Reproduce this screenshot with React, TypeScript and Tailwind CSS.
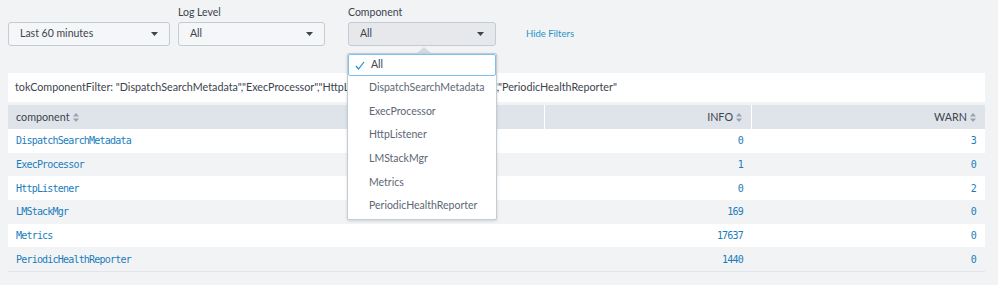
const rows = [
  { name: "DispatchSearchMetadata", info: "0", warn: "3" },
  { name: "ExecProcessor", info: "1", warn: "0" },
  { name: "HttpListener", info: "0", warn: "2" },
  { name: "LMStackMgr", info: "169", warn: "0" },
  { name: "Metrics", info: "17637", warn: "0" },
  { name: "PeriodicHealthReporter", info: "1440", warn: "0" },
];

const options = [
  "DispatchSearchMetadata",
  "ExecProcessor",
  "HttpListener",
  "LMStackMgr",
  "Metrics",
  "PeriodicHealthReporter",
];

function Caret() {
  return (
    <svg width="7" height="4" viewBox="0 0 7 4" className="shrink-0">
      <path d="M0 0h7L3.5 4z" fill="#3c444d" />
    </svg>
  );
}

function SortIcon() {
  return (
    <svg width="6" height="9" viewBox="0 0 6 9" className="ml-[3px] shrink-0">
      <path d="M3 0l3 3.5H0z M3 9L0 5.5h6z" fill="#9aa3ad" />
    </svg>
  );
}

function Select({ label, value, width, active }: { label?: string; value: string; width: string; active?: boolean }) {
  return (
    <div className="flex flex-col">
      <div className="h-[17px] text-[10.5px] leading-[14px] text-[#3c444d]">{label}</div>
      <div
        className={`${width} h-[24px] flex items-center justify-between pl-[11px] pr-[11px] rounded-[3px] border border-[#c3cbd4] text-[10.5px] text-[#3c444d] ${
          active ? "bg-[#e6e8ec]" : "bg-[#f5f6f7]"
        }`}
      >
        <span>{value}</span>
        <Caret />
      </div>
    </div>
  );
}

function Dropdown() {
  return (
    <div className="absolute left-[347px] top-[47px] w-[150px]">
      <div className="ml-[70px] w-0 h-0 border-l-[7px] border-r-[7px] border-b-[6px] border-l-transparent border-r-transparent border-b-[#d5dae0]" />
      <div className="bg-white border border-[#c3cbd4] rounded-[2px] shadow-[0_1px_3px_rgba(0,0,0,0.15)] pb-[1px]">
        <div className="h-[22px] flex items-center border border-[#7ec0f0] rounded-[2px] pl-[6px] text-[10.5px] text-[#3c444d]">
          <svg width="10" height="9" viewBox="0 0 10 9" className="mr-[6px]">
            <path d="M1 5l2.5 3L9 1" stroke="#1e93c6" strokeWidth="1.2" fill="none" />
          </svg>
          All
        </div>
        {options.map((o) => (
          <div key={o} className="h-[23.7px] flex items-center pl-[21px] text-[10.5px] text-[#5c6773]">
            {o}
          </div>
        ))}
      </div>
    </div>
  );
}

export default function App() {
  return (
    <div className="relative w-[998px] h-[285px] bg-[#f2f3f5] overflow-hidden font-['Lato',sans-serif]">
      <div className="flex items-end pl-[8px] pt-[5px]">
        <Select value="Last 60 minutes" width="w-[162px]" />
        <div className="ml-[8px]">
          <Select label="Log Level" value="All" width="w-[147px]" />
        </div>
        <div className="ml-[23px]">
          <Select label="Component" value="All" width="w-[148px]" active />
        </div>
        <div className="ml-[30px] h-[24px] flex items-center text-[9.5px] text-[#1e93c6]">Hide Filters</div>
      </div>

      <div className="mx-[8px] mt-[27px] w-[977px]">
        <div className="h-[29px] bg-white flex items-center pl-[7px] text-[10.75px] text-[#3c444d]">
          tokComponentFilter: "DispatchSearchMetadata","ExecProcessor","HttpListener","LMStackMgr","Metrics","PeriodicHealthReporter"
        </div>
        <div className="mt-[3px] h-[24px] flex bg-[#dfe3ea] text-[10.75px] text-[#3c444d]">
          <div className="w-[537px] flex items-center pl-[8px] border-r border-white">
            component
            <SortIcon />
          </div>
          <div className="w-[207px] flex items-center justify-end pr-[9px] border-r border-white">
            INFO
            <SortIcon />
          </div>
          <div className="flex-1 flex items-center justify-end pr-[9px]">
            WARN
            <SortIcon />
          </div>
        </div>
        <div className="border-b border-[#e1e4e8]">
          {rows.map((r, i) => (
            <div
              key={r.name}
              className={`h-[23.67px] flex items-center font-['DejaVu_Sans_Mono',monospace] text-[10px] tracking-[-0.8px] text-[#1a7dba] ${
                i % 2 === 0 ? "bg-white" : "bg-[#f2f3f5]"
              }`}
            >
              <div className="w-[537px] pl-[8px]">{r.name}</div>
              <div className="w-[207px] text-right pr-[9px]">{r.info}</div>
              <div className="flex-1 text-right pr-[9px]">{r.warn}</div>
            </div>
          ))}
        </div>
      </div>

      <Dropdown />
    </div>
  );
}
